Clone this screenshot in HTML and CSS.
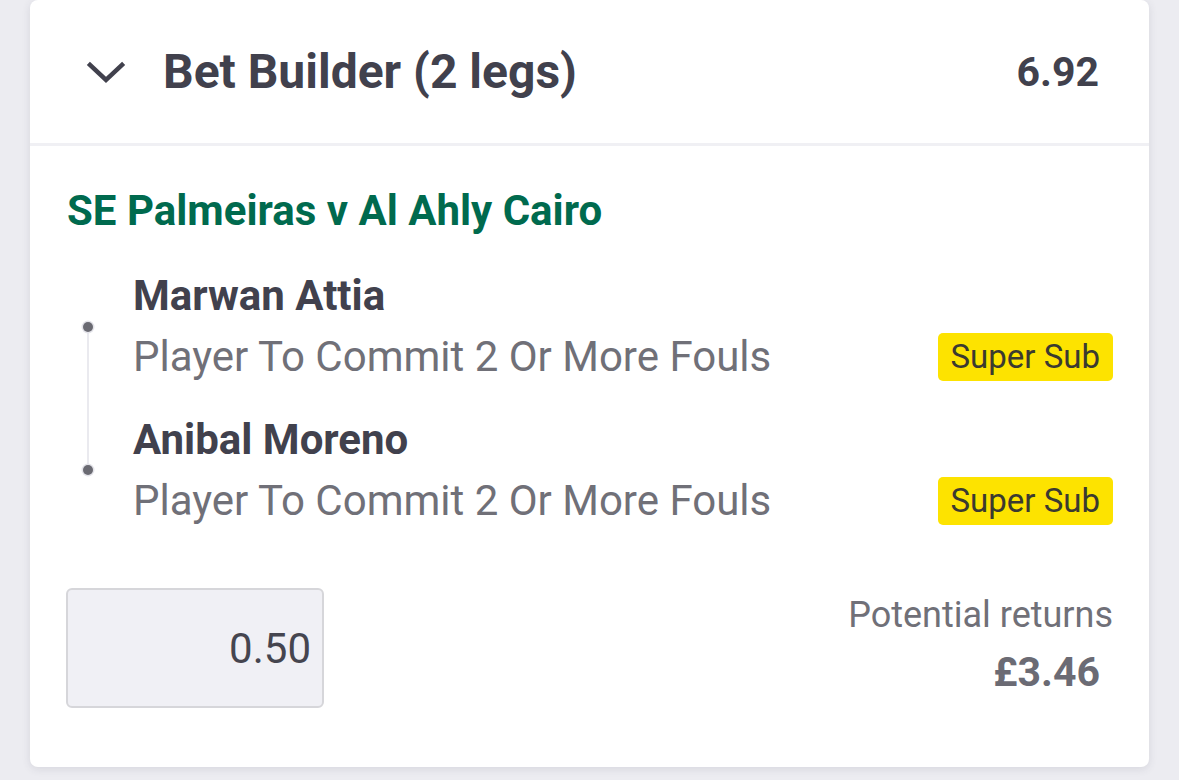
FILE: index.html
```html
<!DOCTYPE html>
<html>
<head>
<meta charset="utf-8">
<link rel="stylesheet" href="styles.css">
</head>
<body>
<div class="page">
  <div class="card">
    <div class="card-header">
      <svg class="chevron" width="40" height="26" viewBox="0 0 40 26">
        <path d="M4 5 L20 20 L36 5" fill="none" stroke="#41414d" stroke-width="4.5" stroke-linecap="square"/>
      </svg>
      <div class="title">Bet Builder (2 legs)</div>
      <div class="odds">6.92</div>
    </div>
    <div class="card-body">
      <div class="event">SE Palmeiras v Al Ahly Cairo</div>
      <div class="legs">
        <div class="timeline">
          <span class="line"></span>
          <span class="dot dot-top"></span>
          <span class="dot dot-bottom"></span>
        </div>
        <div class="leg">
          <div class="player">Marwan Attia</div>
          <div class="market-row">
            <div class="market">Player To Commit 2 Or More Fouls</div>
            <span class="badge">Super Sub</span>
          </div>
        </div>
        <div class="leg">
          <div class="player">Anibal Moreno</div>
          <div class="market-row">
            <div class="market">Player To Commit 2 Or More Fouls</div>
            <span class="badge">Super Sub</span>
          </div>
        </div>
      </div>
      <div class="footer">
        <div class="stake">0.50</div>
        <div class="returns">
          <div class="returns-label">Potential returns</div>
          <div class="returns-value">£3.46</div>
        </div>
      </div>
    </div>
  </div>
</div>
</body>
</html>
```
FILE: styles.css
```css
html, body {
  margin: 0;
  padding: 0;
  background: #ececf1;
  font-family: Roboto, "Liberation Sans", sans-serif;
}
.page {
  width: 1179px;
  height: 780px;
  padding: 0 30px;
  box-sizing: border-box;
  overflow: hidden;
}
.card {
  background: #ffffff;
  border-radius: 8px;
  height: 767px;
  box-shadow: 0 2px 8px rgba(60, 60, 80, 0.12);
  display: flex;
  flex-direction: column;
}
.card-header {
  height: 143px;
  display: flex;
  align-items: center;
  border-bottom: 3px solid #f0f0f4;
  padding: 0 50px 0 56px;
}
.chevron {
  flex: none;
  margin-top: 2px;
}
.title {
  margin-left: 37px;
  font-size: 48px;
  font-weight: 700;
  color: #41414d;
  flex: 1;
}
.odds {
  font-size: 41px;
  font-weight: 700;
  color: #41414d;
}
.card-body {
  padding: 39px 36px 0 37px;
  display: flex;
  flex-direction: column;
}
.event {
  font-size: 42px;
  font-weight: 700;
  color: #006a4e;
  line-height: 52px;
}
.legs {
  position: relative;
  margin-top: 34px;
  padding-left: 66px;
  display: flex;
  flex-direction: column;
  gap: 34px;
}
.timeline {
  position: absolute;
  left: 15px;
  top: 51px;
  height: 153px;
  width: 12px;
}
.timeline .line {
  position: absolute;
  left: 5px;
  top: 5px;
  bottom: 5px;
  width: 2px;
  background: #eaeaef;
}
.timeline .dot {
  position: absolute;
  left: 1px;
  width: 10px;
  height: 10px;
  border-radius: 50%;
  background: #6a6a72;
  box-shadow: 0 0 0 1.5px #e4e4ea;
}
.dot-top { top: 0; }
.dot-bottom { bottom: 0; }
.player {
  font-size: 42px;
  font-weight: 700;
  color: #41414d;
  line-height: 50px;
}
.market-row {
  display: flex;
  align-items: center;
  justify-content: space-between;
  margin-top: 12px;
}
.market {
  font-size: 42px;
  color: #707078;
  line-height: 48px;
}
.badge {
  background: #fde300;
  color: #3b3a30;
  font-size: 33px;
  line-height: 48px;
  padding: 0 13px;
  border-radius: 5px;
}
.footer {
  display: flex;
  justify-content: space-between;
  align-items: flex-start;
  margin-top: 63px;
}
.stake {
  width: 258px;
  height: 120px;
  box-sizing: border-box;
  background: #f0f0f5;
  border: 2px solid #d6d6da;
  border-radius: 6px;
  font-size: 42px;
  color: #45454f;
  display: flex;
  align-items: center;
  justify-content: flex-end;
  padding-right: 11px;
  margin-left: -1px;
}
.returns {
  display: flex;
  flex-direction: column;
  align-items: flex-end;
  margin-top: 6px;
}
.returns-label {
  font-size: 36px;
  color: #707078;
  line-height: 42px;
}
.returns-value {
  font-size: 41px;
  font-weight: 700;
  color: #6b6b74;
  line-height: 50px;
  margin-top: 11px;
  margin-right: 13px;
}
```
